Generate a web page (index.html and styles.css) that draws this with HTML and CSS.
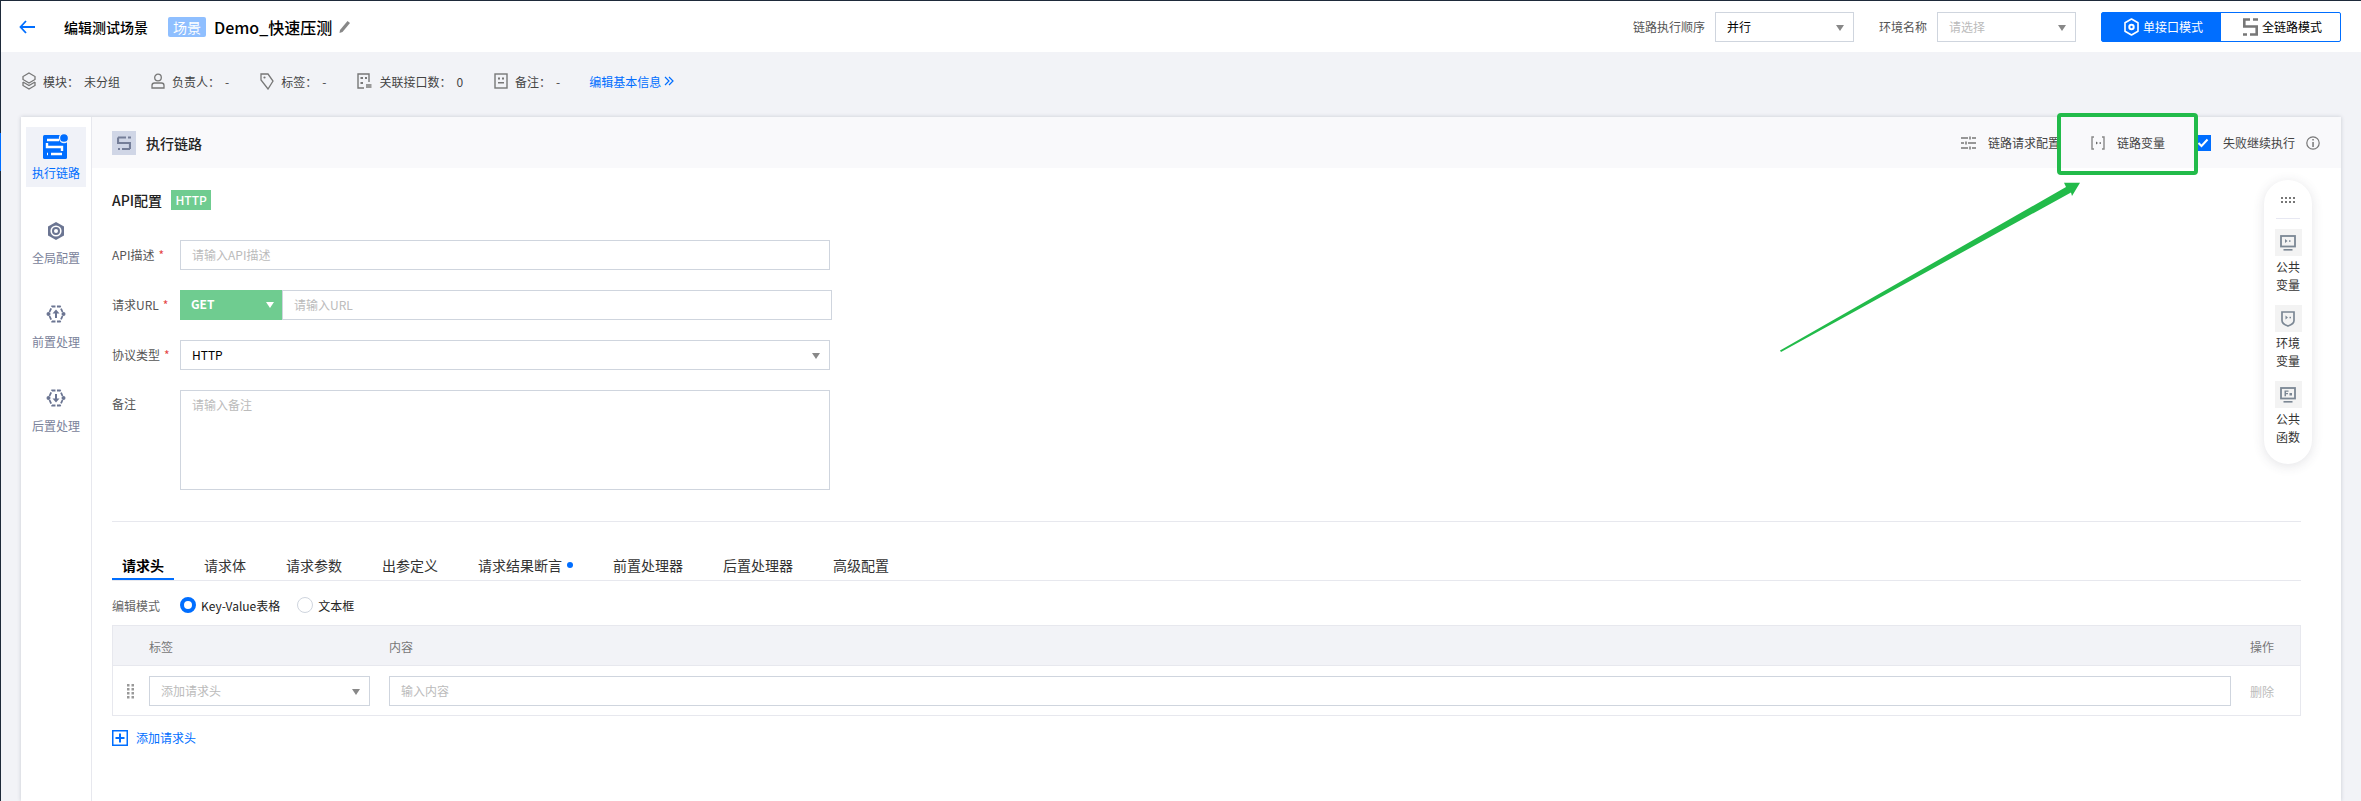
FILE: index.html
```html
<!DOCTYPE html>
<html>
<head>
<meta charset="utf-8">
<title>编辑测试场景</title>
<link rel="stylesheet" href="styles.css">
</head>
<body>
<div class="app">
    <div class="side-mark"></div>

    <!-- top bar -->
    <div class="top">
        <div class="top-left">
            <svg class="back" width="16" height="14" viewBox="0 0 16 14"><path d="M7 1 1.500 7 7 13M2 7h14" fill="none" stroke="#006eff" stroke-width="1.800"/></svg>
            <span class="page-title">编辑测试场景</span>
            <span class="scene-tag">场景</span>
            <span class="scene-name">Demo_快速压测</span>
            <svg width="13" height="14" viewBox="0 0 13 14"><path d="M9.500 1 12 3 4.500 12 1.500 13 2 10z" fill="#888"/></svg>
        </div>
        <div class="top-right">
            <span class="top-label">链路执行顺序</span>
            <div class="field top-select">并行<i class="caret"></i></div>
            <span class="top-label env-label">环境名称</span>
            <div class="field top-select placeholder">请选择<i class="caret"></i></div>
            <div class="mode-group">
                <div class="mode mode-on">
                    <svg width="15" height="18" viewBox="0 0 15 18"><path d="M7.500 1 14 4.800v8.400L7.500 17 1 13.200V4.800z" fill="none" stroke="#fff" stroke-width="1.600" stroke-linejoin="round"/><circle cx="7.500" cy="9" r="3.200" fill="#fff"/><circle cx="7.500" cy="9" r="1.200" fill="#006eff"/></svg>
                    单接口模式
                </div>
                <div class="mode">
                    <svg width="15" height="18" viewBox="0 0 15 18"><path d="M0 1.500h7M10 1.500h5M1.300 1.500v7h12.400v8M0 16.500h4M7 16.500h8" fill="none" stroke="#777" stroke-width="2.600"/></svg>
                    全链路模式
                </div>
            </div>
        </div>
    </div>

    <!-- scene info -->
    <div class="info">
        <div class="info-item">
            <svg width="14" height="18" viewBox="0 0 14 18"><path d="M7 1 13 4.500v3L7 11 1 7.500v-3zM1 10l6 3.500 6-3.500M1 10v3.500L7 17l6-3.500V10" fill="none" stroke="#777" stroke-width="1.300"/></svg>
            <span>模块：</span><span class="info-value">未分组</span>
        </div>
        <div class="info-item">
            <svg width="14" height="16" viewBox="0 0 14 16"><circle cx="7" cy="4.500" r="3.300" fill="none" stroke="#777" stroke-width="1.300"/><path d="M1 15v-2.500Q1 10 3.500 10h7q2.500 0 2.500 2.500V15z" fill="none" stroke="#777" stroke-width="1.300"/></svg>
            <span>负责人：</span><span class="info-value">-</span>
        </div>
        <div class="info-item">
            <svg width="14" height="18" viewBox="0 0 14 18"><path d="M1 2h7l5 7-5 8-7-9z" fill="none" stroke="#777" stroke-width="1.300"/><circle cx="4.500" cy="5.500" r="1.100" fill="#777"/></svg>
            <span>标签：</span><span class="info-value">-</span>
        </div>
        <div class="info-item">
            <svg width="15" height="16" viewBox="0 0 15 16"><path d="M7 15H1V1h11v8" fill="none" stroke="#777" stroke-width="1.400"/><path d="M3.500 4h2.500v2H3.500zM8 4h2v2H8zM3.500 9h2.500v2H3.500z" fill="#777"/><rect x="9" y="11" width="5.500" height="4" fill="#999"/></svg>
            <span>关联接口数：</span><span class="info-value">0</span>
        </div>
        <div class="info-item">
            <svg width="14" height="16" viewBox="0 0 14 16"><rect x="1" y="1" width="12" height="14" fill="none" stroke="#777" stroke-width="1.400"/><path d="M4 4.500h2v2H4zM8 4.500h2v2H8zM4 9h6v1.500H4z" fill="#777"/></svg>
            <span>备注：</span><span class="info-value">-</span>
        </div>
        <a class="info-edit">编辑基本信息
            <svg width="10" height="10" viewBox="0 0 10 10"><path d="M1 1 5 5 1 9M5 1 9 5 5 9" fill="none" stroke="#006eff" stroke-width="1.200"/></svg>
        </a>
    </div>

    <div class="card">
        <!-- left nav -->
        <div class="nav">
            <div class="nav-item nav-on">
                <svg width="26" height="26" viewBox="0 0 26 26">
                    <rect x="0" y="2" width="24" height="24" rx="1.500" fill="#006eff"/>
                    <path d="M4 7h12M19 7h2M4 10v4h15v4M4 21h1M8 21h11" fill="none" stroke="#fff" stroke-width="2.400"/>
                    <circle cx="21" cy="5" r="4.500" fill="#006eff" stroke="#f0f2f8" stroke-width="1.300"/>
                </svg>
                <span>执行链路</span>
            </div>
            <div class="nav-item">
                <svg width="18" height="20" viewBox="0 0 18 20"><path d="M9 1 17 5.500v9L9 19 1 14.500v-9z" fill="#6b7592"/><circle cx="9" cy="10" r="4.800" fill="none" stroke="#fff" stroke-width="1.600"/><circle cx="9" cy="10" r="2" fill="#fff"/></svg>
                <span>全局配置</span>
            </div>
            <div class="nav-item">
                <svg width="20" height="18" viewBox="0 0 20 18"><path d="M3.500 7 6 1.500h8L16.500 7M3.500 11 6 16.500h8l2.500-5.500" fill="none" stroke="#6b7592" stroke-width="1.800" stroke-dasharray="4 1.500"/><circle cx="2.500" cy="9" r="2" fill="#6b7592"/><circle cx="17.500" cy="9" r="2" fill="#6b7592"/><path d="M10 4.500 13.500 8.500H11V13H9V8.500H6.500z" fill="#6b7592"/></svg>
                <span>前置处理</span>
            </div>
            <div class="nav-item">
                <svg width="20" height="18" viewBox="0 0 20 18"><path d="M3.500 7 6 1.500h8L16.500 7M3.500 11 6 16.500h8l2.500-5.500" fill="none" stroke="#6b7592" stroke-width="1.800" stroke-dasharray="4 1.500"/><circle cx="2.500" cy="9" r="2" fill="#6b7592"/><circle cx="17.500" cy="9" r="2" fill="#6b7592"/><path d="M10 13.500 13.500 9.500H11V5H9v4.500H6.500z" fill="#6b7592"/></svg>
                <span>后置处理</span>
            </div>
        </div>

        <div class="main">
            <!-- section header -->
            <div class="main-head">
                <div class="head-icon">
                    <svg width="14" height="14" viewBox="0 0 14 14"><path d="M1 1.500h8M11 1.500h3M1 1.500V7h12v6M1 13h2M5 13h8" fill="none" stroke="#757e98" stroke-width="2.200"/></svg>
                </div>
                <span class="head-title">执行链路</span>
                <div class="head-tools">
                    <svg class="tool-icon" width="15" height="14" viewBox="0 0 15 14"><path d="M0 2h7M11 2h4M9 .5v3M0 7h3M7 7h8M5 5.500v3M0 12h7M11 12h4M9 10.500v3" fill="none" stroke="#777" stroke-width="1.500"/></svg>
                    <span class="tool-text">链路请求配置</span>
                    <svg class="tool-icon var-icon" width="14" height="14" viewBox="0 0 14 14"><path d="M3 1H1v12h2M11 1h2v12h-2" fill="none" stroke="#888" stroke-width="1.400"/><path d="M5 5.500 7 7 5 8.500z" fill="#666"/><rect x="8.500" y="6.300" width="1.500" height="1.500" fill="#666"/></svg>
                    <span class="tool-text">链路变量</span>
                    <span class="check"><svg width="12" height="10" viewBox="0 0 12 10"><path d="M1.500 5 4.500 8 10.500 1.500" fill="none" stroke="#fff" stroke-width="2"/></svg></span>
                    <span class="tool-text">失败继续执行</span>
                    <svg class="info-icon" width="14" height="14" viewBox="0 0 14 14"><circle cx="7" cy="7" r="6.200" fill="none" stroke="#777" stroke-width="1.200"/><path d="M6.300 3h1.500v1.500H6.300zM6.300 6h1.500v5H6.300z" fill="#777"/></svg>
                </div>
            </div>

            <div class="main-body">
                <div class="api-title">
                    <span>API配置</span>
                    <span class="http-tag">HTTP</span>
                </div>

                <div class="form">
                    <div class="form-label">API描述<em>*</em></div>
                    <div class="field placeholder">请输入API描述</div>

                    <div class="form-label">请求URL<em>*</em></div>
                    <div class="url-row">
                        <div class="method">GET<i class="caret caret-white"></i></div>
                        <div class="field placeholder">请输入URL</div>
                    </div>

                    <div class="form-label">协议类型<em>*</em></div>
                    <div class="field">HTTP<i class="caret"></i></div>

                    <div class="form-label form-label-top">备注</div>
                    <div class="field field-area placeholder">请输入备注</div>
                </div>

                <div class="divider"></div>

                <div class="tabs">
                    <div class="tab tab-on">请求头</div>
                    <div class="tab">请求体</div>
                    <div class="tab">请求参数</div>
                    <div class="tab">出参定义</div>
                    <div class="tab">请求结果断言<i class="tab-dot"></i></div>
                    <div class="tab">前置处理器</div>
                    <div class="tab">后置处理器</div>
                    <div class="tab">高级配置</div>
                </div>

                <div class="edit-mode">
                    <span class="edit-label">编辑模式</span>
                    <i class="radio radio-on"></i><span class="radio-text">Key-Value表格</span>
                    <i class="radio radio-second"></i><span class="radio-text">文本框</span>
                </div>

                <div class="table">
                    <div class="table-row table-head">
                        <div class="col-tag">标签</div>
                        <div class="col-value">内容</div>
                        <div class="col-op">操作</div>
                    </div>
                    <div class="table-row table-body">
                        <div class="drag">
                            <svg width="7" height="15" viewBox="0 0 7 15"><path d="M0 0h2.500v2.500H0zM4.500 0H7v2.500H4.500zM0 4h2.500v2.500H0zM4.500 4H7v2.500H4.500zM0 8h2.500v2.500H0zM4.500 8H7v2.500H4.500zM0 12h2.500v2.500H0zM4.500 12H7v2.500H4.500z" fill="#999"/></svg>
                        </div>
                        <div class="col-tag"><div class="field placeholder">添加请求头<i class="caret"></i></div></div>
                        <div class="col-value"><div class="field placeholder">输入内容</div></div>
                        <div class="col-op col-del">删除</div>
                    </div>
                </div>

                <a class="add-row">
                    <svg width="16" height="16" viewBox="0 0 16 16"><rect x="0.750" y="0.750" width="14.500" height="14.500" fill="none" stroke="#006eff" stroke-width="1.500"/><path d="M8 3.500v9M3.500 8h9" stroke="#006eff" stroke-width="2"/></svg>
                    添加请求头
                </a>
            </div>
        </div>

        <!-- floating variable panel -->
        <div class="float-panel">
            <svg class="float-dots" width="14" height="6" viewBox="0 0 14 6"><path d="M0 0h2v2H0zM4 0h2v2H4zM8 0h2v2H8zM12 0h2v2h-2zM0 4h2v2H0zM4 4h2v2H4zM8 4h2v2H8zM12 4h2v2h-2z" fill="#777"/></svg>
            <div class="float-line"></div>
            <div class="float-item">
                <div class="float-tile"><svg width="16" height="16" viewBox="0 0 16 16"><rect x="1" y="1" width="14" height="10.500" fill="none" stroke="#7b8794" stroke-width="1.800"/><path d="M5 4l2.500 2L5 8z" fill="#7b8794"/><rect x="9" y="5.300" width="1.500" height="1.500" fill="#7b8794"/><rect x="3.500" y="14" width="9" height="1.600" fill="#7b8794"/></svg></div>
                <span>公共<br>变量</span>
            </div>
            <div class="float-item">
                <div class="float-tile"><svg width="14" height="16" viewBox="0 0 14 16"><path d="M1 1h12v8.500Q13 13 7 15 1 13 1 9.500z" fill="none" stroke="#7b8794" stroke-width="1.700"/><path d="M4.500 4.500 7 6.500 4.500 8.500z" fill="#7b8794"/><rect x="8.500" y="5.800" width="1.500" height="1.500" fill="#7b8794"/></svg></div>
                <span>环境<br>变量</span>
            </div>
            <div class="float-item">
                <div class="float-tile"><svg width="16" height="16" viewBox="0 0 16 16"><rect x="1" y="1" width="14" height="10.500" fill="none" stroke="#7b8794" stroke-width="1.800"/><path d="M4.500 3.500h4v1.200H6v1.300h2v1.200H6v2H4.500z" fill="#7b8794"/><rect x="9.500" y="6" width="2.500" height="2.500" fill="#7b8794"/><rect x="3.500" y="14" width="9" height="1.600" fill="#7b8794"/></svg></div>
                <span>公共<br>函数</span>
            </div>
        </div>
    </div>

    <!-- annotation drawn over the screenshot -->
    <div class="mark-box"></div>
    <svg class="mark-arrow" width="310" height="180" viewBox="0 0 310 180">
        <path d="M1 171.500 287 8 285 3.700H301L293 17 292 13.500 2 173z" fill="#22bb4a"/>
    </svg>
</div>
</body>
</html>
```

FILE: styles.css
```css
html, body {
    height: 100%;
    margin: 0;
    padding: 0;
}

body {
    font-family: "Noto Sans CJK SC", "Noto Sans", sans-serif;
    font-size: 12px;
    color: #444;
    background-color: #f2f3f7;
    overflow: hidden;
}

* {
    box-sizing: border-box;
}

.app {
    position: relative;
    display: flex;
    flex-direction: column;
    height: 801px;
    border-top: 1px solid #1e2a3a;
    border-left: 1px solid #1e2a3a;
}

.side-mark {
    position: absolute;
    left: -1px;
    top: 132px;
    width: 1px;
    height: 38px;
    background-color: #006eff;
}

.top {
    display: flex;
    align-items: center;
    justify-content: space-between;
    flex: none;
    height: 51px;
    padding: 0 20px 0 18px;
    background-color: #fff;
}

.top-left,
.top-right {
    display: flex;
    align-items: center;
}

.back {
    margin-right: 29px;
}

.page-title {
    margin-right: 20px;
    font-size: 14px;
    font-weight: 500;
    color: #000;
}

.scene-tag {
    width: 38px;
    height: 20px;
    margin-right: 8px;
    font-size: 14px;
    line-height: 20px;
    text-align: center;
    color: #fff;
    background-color: #8fbfff;
    border-radius: 2px;
}

.scene-name {
    margin-right: 6px;
    font-size: 16px;
    font-weight: 500;
    color: #000;
}

.top-label {
    margin-right: 10px;
    color: #555;
}

.env-label {
    margin-left: 25px;
}

.field {
    position: relative;
    flex: 1;
    height: 30px;
    padding: 0 11px;
    line-height: 28px;
    color: #000;
    background-color: #fff;
    border: 1px solid #cfd5de;
}

.top-select {
    flex: none;
    width: 139px;
}

.placeholder {
    color: #bbb;
}

.caret {
    position: absolute;
    top: 12px;
    right: 9px;
    width: 0;
    height: 0;
    border-left: 4px solid transparent;
    border-right: 4px solid transparent;
    border-top: 6px solid #888;
}

.caret-white {
    border-top-color: #fff;
}

.mode-group {
    display: flex;
    width: 240px;
    height: 30px;
    margin-left: 25px;
    border: 1px solid #006eff;
    border-radius: 2px;
}

.mode {
    display: flex;
    align-items: center;
    justify-content: center;
    gap: 4px;
    flex: 1;
    padding-left: 4px;
    color: #000;
}

.mode-on {
    color: #fff;
    background-color: #006eff;
}

.info {
    display: flex;
    align-items: center;
    gap: 31px;
    flex: none;
    height: 60px;
    margin-bottom: 5px;
    padding: 0 0 2px 21px;
    color: #444;
}

.info-item {
    display: flex;
    align-items: center;
}

.info-item svg {
    margin-right: 7px;
}

.info-value {
    margin-left: 5px;
}

.info-edit {
    display: flex;
    align-items: center;
    gap: 3px;
    margin-left: -2px;
    color: #006eff;
}

.card {
    position: relative;
    display: flex;
    flex: 1;
    margin: 0 20px;
    background-color: #fff;
    box-shadow: 0 0 4px rgba(54, 58, 80, .22);
}

.nav {
    display: flex;
    flex-direction: column;
    align-items: center;
    flex: none;
    width: 71px;
    padding-top: 10px;
    border-right: 1px solid #e7e8ee;
}

.nav-item {
    display: flex;
    flex-direction: column;
    align-items: center;
    justify-content: space-between;
    width: 60px;
    height: 45px;
    margin-top: 39px;
    color: #7a829a;
}

.nav-on {
    justify-content: flex-start;
    height: 60px;
    margin-top: 0;
    padding-top: 6px;
    color: #006eff;
    background-color: #f0f2f8;
}

.nav-on span {
    margin-top: 5px;
}

.nav-on + .nav-item {
    margin-top: 34px;
}

.main {
    flex: 1;
    min-width: 0;
}

.main-head {
    display: flex;
    align-items: center;
    height: 51px;
    padding: 0 21px 0 20px;
    background-color: #f9f9fb;
}

.head-icon {
    display: flex;
    align-items: center;
    justify-content: center;
    width: 24px;
    height: 24px;
    margin-right: 10px;
    background-color: #d0d6e6;
}

.head-title {
    font-size: 14px;
    font-weight: 500;
    color: #222;
}

.head-tools {
    display: flex;
    align-items: center;
    margin-left: auto;
}

.tool-icon {
    margin-right: 12px;
}

.var-icon {
    margin-left: 31px;
}

.check {
    display: flex;
    align-items: center;
    justify-content: center;
    width: 16px;
    height: 16px;
    margin: 0 12px 0 30px;
    background-color: #006eff;
}

.info-icon {
    margin-left: 11px;
}

.main-body {
    padding: 22px 40px 0 20px;
}

.api-title {
    display: flex;
    align-items: center;
    height: 20px;
    font-size: 14px;
    font-weight: 500;
    color: #222;
}

.http-tag {
    width: 40px;
    margin-left: 9px;
    font-size: 12px;
    line-height: 20px;
    text-align: center;
    color: #fff;
    background-color: #6fcc90;
}

.form {
    display: grid;
    grid-template-columns: 68px 650px;
    row-gap: 20px;
    margin-top: 30px;
}

.form-label {
    line-height: 30px;
    color: #555;
}

.form-label em {
    margin-left: 4px;
    font-style: normal;
    color: #e54545;
}

.form-label-top {
    line-height: 28px;
}

.url-row {
    display: flex;
    width: 652px;
}

.method {
    position: relative;
    flex: none;
    width: 102px;
    height: 30px;
    padding-left: 11px;
    font-weight: 700;
    line-height: 28px;
    color: #fff;
    background-color: #6fcc90;
}

.method .caret {
    right: 8px;
}

.field-area {
    height: 100px;
}

.divider {
    height: 1px;
    margin-top: 31px;
    background-color: #e7e8ee;
}

.tabs {
    display: flex;
    gap: 20px;
    margin-top: 30px;
    border-bottom: 1px solid #e7e8ee;
}

.tab {
    position: relative;
    height: 28px;
    padding: 0 10px;
    font-size: 14px;
    line-height: 27px;
    color: #333;
}

.tab-on {
    font-weight: 700;
    color: #000;
    border-bottom: 2px solid #006eff;
}

.tab-dot {
    display: inline-block;
    width: 6px;
    height: 6px;
    margin-left: 5px;
    vertical-align: 3px;
    background-color: #006eff;
    border-radius: 50%;
}

.edit-mode {
    display: flex;
    align-items: center;
    height: 16px;
    margin-top: 16px;
}

.edit-label {
    margin-right: 20px;
    color: #666;
}

.radio {
    flex: none;
    width: 16px;
    height: 16px;
    margin-right: 5px;
    background-color: #fff;
    border: 1px solid #cfd5de;
    border-radius: 50%;
}

.radio-on {
    border: 4px solid #006eff;
}

.radio-second {
    margin-left: 17px;
}

.radio-text {
    color: #222;
}

.table {
    margin-top: 12px;
    border: 1px solid #e7e8ee;
}

.table-row {
    display: flex;
    align-items: center;
    padding-left: 36px;
}

.table-head {
    height: 40px;
    padding-top: 2px;
    color: #777;
    background-color: #f2f3f7;
    border-bottom: 1px solid #e7e8ee;
}

.table-body {
    position: relative;
    height: 49px;
    padding-top: 1px;
}

.drag {
    position: absolute;
    left: 14px;
    top: 18px;
    line-height: 0;
}

.col-tag {
    flex: none;
    display: flex;
    width: 240px;
}

.col-tag .field {
    flex: none;
    width: 221px;
}

.col-value {
    flex: 1;
    display: flex;
}

.col-op {
    flex: none;
    width: 69px;
    padding-left: 19px;
}

.col-del {
    color: #bbb;
}

.add-row {
    display: flex;
    align-items: center;
    gap: 8px;
    margin-top: 13px;
    color: #006eff;
}

.float-panel {
    position: absolute;
    top: 63px;
    right: 29px;
    display: flex;
    flex-direction: column;
    align-items: center;
    width: 48px;
    height: 284px;
    padding-top: 17px;
    background-color: #fff;
    border-radius: 24px;
    box-shadow: 0 2px 12px rgba(54, 58, 80, .14);
}

.float-dots {
    flex: none;
}

.float-line {
    flex: none;
    width: 24px;
    height: 1px;
    margin: 15px 0 10px;
    background-color: #e7e8f2;
}

.float-item {
    display: flex;
    flex-direction: column;
    align-items: center;
    margin-bottom: 11px;
    line-height: 18px;
    text-align: center;
    color: #333;
}

.float-item span {
    margin-top: 2px;
}

.float-tile {
    display: flex;
    align-items: center;
    justify-content: center;
    width: 27px;
    height: 27px;
    background-color: #f3f3f3;
}

.mark-box {
    position: absolute;
    left: 2056px;
    top: 112px;
    width: 141px;
    height: 62px;
    border: 4px solid #22bb4a;
    border-radius: 4px;
}

.mark-arrow {
    position: absolute;
    left: 1778px;
    top: 178px;
}
```
